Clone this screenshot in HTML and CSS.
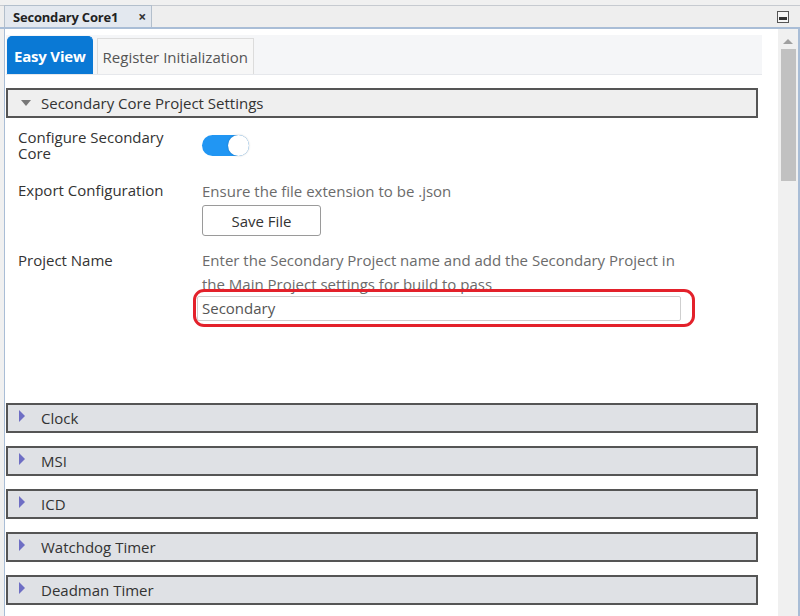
FILE: index.html
```html
<!DOCTYPE html>
<html>
<head>
<meta charset="utf-8">
<link rel="stylesheet" href="styles.css">
</head>
<body>
<div class="window">
  <div class="doc-strip">
    <div class="doc-tab"><span class="doc-title">Secondary Core1</span><span class="doc-close">×</span></div>
    <div class="doc-min"><span></span></div>
  </div>
  <div class="panel">
    <div class="content">
      <div class="view-tabs">
        <div class="vtab active">Easy View</div>
        <div class="vtab">Register Initialization</div>
      </div>

      <div class="section open">
        <div class="sec-head"><span class="caret-down"></span>Secondary Core Project Settings</div>
        <div class="sec-body">
          <div class="row r1">
            <div class="label">Configure Secondary<br>Core</div>
            <div class="field"><div class="toggle"><span class="knob"></span></div></div>
          </div>
          <div class="row r2">
            <div class="label">Export Configuration</div>
            <div class="field">
              <div class="hint">Ensure the file extension to be .json</div>
              <button class="btn">Save File</button>
            </div>
          </div>
          <div class="row r3">
            <div class="label">Project Name</div>
            <div class="field">
              <div class="hint wide">Enter the Secondary Project name and add the Secondary Project in<br>the Main Project settings for build to pass</div>
              <div class="input-wrap"><div class="input">Secondary</div><span class="highlight"></span></div>
            </div>
          </div>
        </div>
      </div>

      <div class="sections">
        <div class="sec-head closed"><span class="caret-right"></span>Clock</div>
        <div class="sec-head closed"><span class="caret-right"></span>MSI</div>
        <div class="sec-head closed"><span class="caret-right"></span>ICD</div>
        <div class="sec-head closed"><span class="caret-right"></span>Watchdog Timer</div>
        <div class="sec-head closed"><span class="caret-right"></span>Deadman Timer</div>
      </div>
    </div>
    <div class="scrollbar">
      <div class="sb-up"></div>
      <div class="sb-thumb"></div>
    </div>
  </div>
</div>
</body>
</html>
```

FILE: styles.css
```css
* { box-sizing: border-box; }
html, body { margin: 0; padding: 0; }
body {
  width: 800px;
  height: 616px;
  overflow: hidden;
  background: #f0f0f0;
  font-family: "Open Sans", "Noto Sans", sans-serif;
  color: #333;
}
.window {
  padding-top: 5px;
  height: 616px;
  display: flex;
  flex-direction: column;
}
.doc-strip {
  height: 24px;
  border-top: 1px solid #c6cad0;
  border-bottom: 2px solid #a9bdd6;
  background: #eeeeee;
  display: flex;
  align-items: flex-end;
  padding-left: 4px;
}
.doc-tab {
  width: 148px;
  height: 22px;
  background: #e3e8ef;
  border: 1px solid #b3bfcc;
  border-bottom: none;
  display: flex;
  align-items: center;
  padding-left: 8px;
  font-size: 13px;
  font-weight: 700;
  color: #222;
  letter-spacing: -0.2px;
}
.doc-close {
  margin-left: 20px;
  font-size: 14px;
  font-weight: 700;
  color: #333;
}
.doc-min {
  margin-left: auto;
  margin-right: 11px;
  margin-bottom: 4px;
  width: 12px;
  height: 12px;
  border: 1px solid #555;
  background: #f6f6f6;
  display: flex;
  align-items: flex-end;
  justify-content: center;
  padding-bottom: 2px;
}
.doc-min span { width: 8px; height: 3px; background: #333; }
.panel {
  flex: 1;
  display: flex;
  background: #fff;
  margin-left: 4px;
  border-left: 1px solid #a9bdd6;
  border-right: 2px solid #a9bdd6;
  min-height: 0;
}
.content {
  flex: 1;
  padding: 6px 16px 0 1px;
}
.view-tabs {
  display: flex;
  align-items: flex-end;
  gap: 4px;
  padding-left: 1px;
  height: 40px;
  background: #f5f6f8;
  border-bottom: 1px solid #e6e8ec;
}
.vtab {
  height: 36px;
  padding: 0 5px;
  display: flex;
  align-items: center;
  font-size: 15px;
  color: #555;
  background: #f7f7f7;
  border: 1px solid #dcdcdc;
  border-bottom: none;
}
.vtab.active {
  height: 38px;
  background: #0a79d5;
  border-color: #0a79d5;
  color: #fff;
  font-weight: 700;
  border-radius: 5px 5px 0 0;
  padding: 0 6px;
  letter-spacing: -0.2px;
}
.section.open { margin-top: 13px; margin-right: 4px; }
.sec-head {
  height: 30px;
  border: 2px solid #555;
  background: #efefef;
  display: flex;
  align-items: center;
  font-size: 15px;
  color: #333;
  padding-left: 13px;
}
.caret-down {
  width: 0; height: 0;
  border-left: 5px solid transparent;
  border-right: 5px solid transparent;
  border-top: 6px solid #777;
  margin-right: 10px;
}
.caret-right {
  width: 0; height: 0;
  border-top: 6px solid transparent;
  border-bottom: 6px solid transparent;
  border-left: 6px solid #6e6ec4;
  margin-right: 16px;
  margin-top: -4px;
}
.sec-head.closed {
  background: #dfe1e5;
  padding-left: 11px;
}
.sec-body {
  padding: 12px 0 0 12px;
  height: 285px;
}
.row {
  display: grid;
  grid-template-columns: 184px 1fr;
  font-size: 15px;
}
.label { line-height: 16px; color: #333; }
.r1 .label { margin-top: -1px; }
.r2 { margin-top: 21px; }
.r3 { margin-top: 16px; }
.toggle {
  margin-top: 5px;
  width: 47px;
  height: 21px;
  border-radius: 11px;
  background: #2196f3;
  position: relative;
}
.knob {
  position: absolute;
  right: 0; top: 0;
  width: 21px; height: 21px;
  border-radius: 50%;
  background: #fff;
  box-shadow: 0 0 2px rgba(0,0,0,0.25);
}
.hint { color: #6b6b6b; line-height: 18px; }
.wide { line-height: 24px; margin-top: -4px; white-space: nowrap; }
.btn {
  margin-top: 5px;
  width: 119px;
  height: 31px;
  font-family: inherit;
  font-size: 15px;
  color: #333;
  background: #fff;
  border: 1px solid #9a9a9a;
  border-radius: 3px;
}
.input-wrap {
  position: relative;
  margin-left: -5px;
  margin-top: 0;
  width: 484px;
}
.input {
  height: 25px;
  border: 1px solid #cfcfcf;
  border-radius: 2px;
  padding-left: 4px;
  line-height: 23px;
  font-size: 15px;
  color: #555;
}
.highlight {
  position: absolute;
  left: -4px; top: -7px;
  width: 502px; height: 38px;
  border: 3px solid #e3212b;
  border-radius: 11px;
}
.sections {
  display: flex;
  flex-direction: column;
  gap: 13px;
  margin-right: 4px;
}
.scrollbar {
  width: 20px;
  background: #f0f0f0;
}
.sb-up {
  width: 0; height: 0;
  margin: 10px auto 0;
  border-left: 5px solid transparent;
  border-right: 5px solid transparent;
  border-bottom: 5px solid #a0a0a0;
}
.sb-thumb {
  margin: 5px auto 0;
  width: 15px;
  height: 132px;
  background: #c1c1c1;
}
```
